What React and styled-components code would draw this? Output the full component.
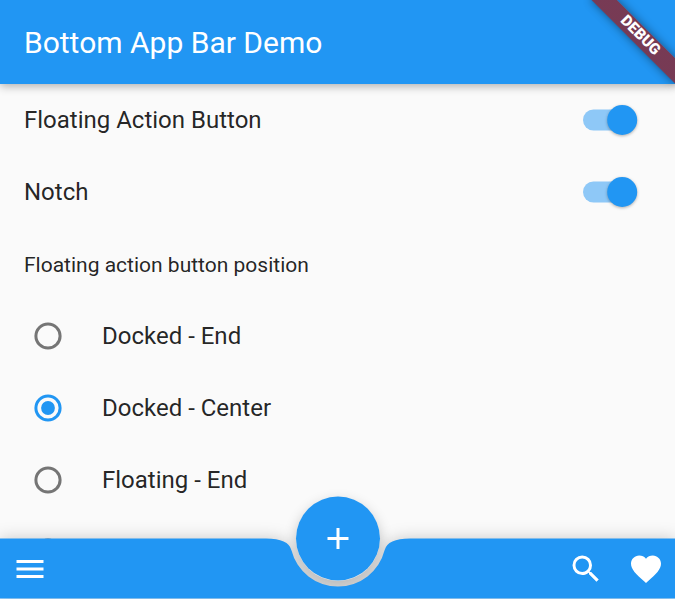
import React from "react";
import styled, { createGlobalStyle } from "styled-components";

const BLUE = "#2196f3";

const GlobalStyle = createGlobalStyle`
  html, body { margin: 0; background: #fff; overflow: hidden; }
  * { box-sizing: border-box; }
`;

const Screen = styled.div`
  position: relative;
  width: 675px;
  height: 599px;
  overflow: hidden;
  display: flex;
  flex-direction: column;
  background: #fafafa;
  color: rgba(0, 0, 0, 0.87);
  font-family: Roboto, sans-serif;
`;

const AppBar = styled.header`
  flex: none;
  height: 84px;
  padding: 2px 24px 0;
  display: flex;
  align-items: center;
  background: ${BLUE};
  box-shadow: 0 2px 9px rgba(0, 0, 0, 0.32);
  z-index: 1;
`;

const Title = styled.h1`
  margin: 0;
  color: #fff;
  font-size: 30px;
  font-weight: 400;
  line-height: 36px;
`;

const Banner = styled.div`
  position: absolute;
  z-index: 3;
  top: 41px;
  left: 615px;
  width: 120px;
  height: 18px;
  padding-left: 1px;
  transform: rotate(45deg);
  transform-origin: 60px -41px;
  background: linear-gradient(rgba(183, 28, 28, 0.6), rgba(183, 28, 28, 0.6)),
    rgba(0, 0, 0, 0.3);
  box-shadow: 0 0 10px rgba(0, 0, 0, 0.45);
  color: #fff;
  font-size: 15.3px;
  font-weight: 900;
  line-height: 17px;
  text-align: center;
`;

const Body = styled.main`
  flex: 1;
  min-height: 0;
  overflow: hidden;
`;

const SwitchRow = styled.div`
  height: 72px;
  padding: 0 38px 0 24px;
  display: flex;
  align-items: center;
  justify-content: space-between;
  font-size: 24px;
`;

const SwitchArt = styled.svg`
  flex: none;
  display: block;
  overflow: visible;

  circle {
    filter: drop-shadow(0 1.5px 1.5px rgba(0, 0, 0, 0.3));
  }
`;

const Switch = () => (
  <SwitchArt width="54" height="30" viewBox="0.5 0 54 30">
    <rect y="4.5" x="0.5" width="49.5" height="21" rx="10.5" fill={BLUE} fillOpacity="0.5" />
    <circle cx="39.7" cy="15" r="15" fill={BLUE} />
  </SwitchArt>
);

const SectionLabel = styled.div`
  height: 72px;
  padding: 2px 24px 0;
  display: flex;
  align-items: center;
  font-size: 21px;
`;

const RadioRow = styled.div`
  height: 72px;
  padding-left: 34px;
  display: flex;
  align-items: center;
  gap: 40px;
  font-size: 24px;
`;

const Radio = ({ checked }) => (
  <svg width="28" height="28" viewBox="0 0 28 28">
    <circle cx="14" cy="14" r="12.1" fill="none" stroke={checked ? BLUE : "#757575"} strokeWidth="3" />
    {checked && <circle cx="14" cy="14" r="6.9" fill={BLUE} />}
  </svg>
);

const BarShadow = styled.div`
  position: absolute;
  z-index: 1;
  left: 0;
  right: 0;
  bottom: 0;
  filter: drop-shadow(0 0 8px rgba(0, 0, 0, 0.2));
`;

const BottomBar = styled.footer`
  height: 61px;
  padding: 0 8px 0 9px;
  display: flex;
  align-items: center;
  background: ${BLUE};
  clip-path: path(
    "M0 .5H266Q288.5 .5 291.45 12.23A48 48 0 0 0 384.55 12.23Q387.5 .5 410 .5H675V60.5H0Z"
  );
`;

const IconButton = styled.button`
  width: 42px;
  height: 60px;
  padding: 0;
  display: grid;
  place-items: center;
  border: 0;
  background: none;
  color: #fff;
  margin-left: ${(p) => p.$gap || 0};
`;

const Fab = styled.button`
  position: absolute;
  z-index: 2;
  left: 296px;
  bottom: 18px;
  width: 84px;
  height: 84px;
  padding: 0;
  display: grid;
  place-items: center;
  border: 0;
  border-radius: 50%;
  background: ${BLUE};
  color: #fff;
  transform: translateY(-0.5px);
`;

const FabShadow = styled.div`
  position: absolute;
  z-index: 0;
  left: 296px;
  bottom: 18px;
  width: 84px;
  height: 84px;
  border-radius: 50%;
  box-shadow: 0 5px 14px rgba(0, 0, 0, 0.24);
`;

const Icon = ({ d }) => (
  <svg width="36" height="36" viewBox="0 0 24 24" fill="currentColor">
    <path d={d} />
  </svg>
);

const MENU = "M3 18h18v-2H3v2zm0-5h18v-2H3v2zm0-7v2h18V6H3z";
const SEARCH =
  "M15.5 14h-.79l-.28-.27A6.471 6.471 0 0 0 16 9.5 6.5 6.5 0 1 0 9.5 16c1.61 0 3.09-.59 4.23-1.57l.27.28v.79l5 4.99L20.49 19l-4.99-5zm-6 0C7.01 14 5 11.99 5 9.5S7.01 5 9.5 5 14 7.01 14 9.5 11.99 14 9.5 14z";
const HEART =
  "M12 21.35l-1.45-1.32C5.4 15.36 2 12.28 2 8.5 2 5.42 4.42 3 7.5 3c1.74 0 3.41.81 4.5 2.09C13.09 3.81 14.76 3 16.5 3 19.58 3 22 5.42 22 8.5c0 3.78-3.4 6.86-8.55 11.54L12 21.35z";
const PLUS = "M19 13h-6v6h-2v-6H5v-2h6V5h2v6h6v2z";

const POSITIONS = ["Docked - End", "Docked - Center", "Floating - End", "Floating - Center"];

export default function App() {
  return (
    <>
      <GlobalStyle />
      <Screen>
        <AppBar>
          <Title>Bottom App Bar Demo</Title>
        </AppBar>
        <Banner>DEBUG</Banner>
        <Body>
          {["Floating Action Button", "Notch"].map((label) => (
            <SwitchRow key={label}>
              {label}
              <Switch />
            </SwitchRow>
          ))}
          <SectionLabel>Floating action button position</SectionLabel>
          {POSITIONS.map((label) => (
            <RadioRow key={label}>
              <Radio checked={label === "Docked - Center"} />
              {label}
            </RadioRow>
          ))}
        </Body>
        <FabShadow />
        <BarShadow>
          <BottomBar>
            <IconButton aria-label="Menu">
              <Icon d={MENU} />
            </IconButton>
            <IconButton aria-label="Search" $gap="auto">
              <Icon d={SEARCH} />
            </IconButton>
            <IconButton aria-label="Favorite" $gap="18px">
              <Icon d={HEART} />
            </IconButton>
          </BottomBar>
        </BarShadow>
        <Fab aria-label="Add">
          <Icon d={PLUS} />
        </Fab>
      </Screen>
    </>
  );
}
